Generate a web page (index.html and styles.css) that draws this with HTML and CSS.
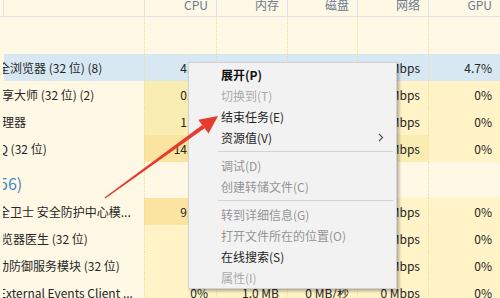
FILE: index.html
```html
<!DOCTYPE html>
<html lang="zh-CN">
<head>
    <meta charset="UTF-8">
    <title>任务管理器 - 右键菜单</title>
    <link rel="stylesheet" href="styles.css">
</head>
<body>
    <div class="taskmgr">
        <div class="row head">
            <div class="cell name"></div>
            <div class="cell">CPU</div>
            <div class="cell">内存</div>
            <div class="cell">磁盘</div>
            <div class="cell">网络</div>
            <div class="cell">GPU</div>
        </div>
        <div class="row blank">
            <div class="cell name"></div>
            <div class="cell"></div>
            <div class="cell"></div>
            <div class="cell"></div>
            <div class="cell"></div>
            <div class="cell"></div>
        </div>

        <div class="row sel">
            <div class="cell name"><span class="cut c5">全</span>浏览器 (32 位) (8)</div>
            <div class="cell">4.1%</div>
            <div class="cell">112.4 MB</div>
            <div class="cell">0.1 MB/秒</div>
            <div class="cell">0.1 Mbps</div>
            <div class="cell">4.7%</div>
        </div>
        <div class="row">
            <div class="cell name"><span class="cut c1">享</span>大师 (32 位) (2)</div>
            <div class="cell h1">0.3%</div>
            <div class="cell h0">20.6 MB</div>
            <div class="cell h0">0 MB/秒</div>
            <div class="cell h0">0 Mbps</div>
            <div class="cell h0">0%</div>
        </div>
        <div class="row">
            <div class="cell name"><span class="cut c1">理</span>器</div>
            <div class="cell h1">1.2%</div>
            <div class="cell h0">31.8 MB</div>
            <div class="cell h0">0 MB/秒</div>
            <div class="cell h0">0 Mbps</div>
            <div class="cell h0">0%</div>
        </div>
        <div class="row">
            <div class="cell name"><span class="cut c4">Q</span> (32 位)</div>
            <div class="cell h2">14.6%</div>
            <div class="cell h0">86.2 MB</div>
            <div class="cell h0">0.1 MB/秒</div>
            <div class="cell h1">0 Mbps</div>
            <div class="cell h0">0%</div>
        </div>

        <div class="row group">
            <div class="cell name"><span class="cut c4">5</span>6)</div>
            <div class="cell"></div>
            <div class="cell"></div>
            <div class="cell"></div>
            <div class="cell"></div>
            <div class="cell"></div>
        </div>

        <div class="row">
            <div class="cell name"><span class="cut c5">全</span>卫士 安全防护中心模...</div>
            <div class="cell h2">9.8%</div>
            <div class="cell h0">44.0 MB</div>
            <div class="cell h0">0 MB/秒</div>
            <div class="cell h0">0 Mbps</div>
            <div class="cell h0">0%</div>
        </div>
        <div class="row">
            <div class="cell name"><span class="cut c2">览</span>器医生 (32 位)</div>
            <div class="cell h0">0%</div>
            <div class="cell h0">3.2 MB</div>
            <div class="cell h0">0 MB/秒</div>
            <div class="cell h0">0 Mbps</div>
            <div class="cell h0">0%</div>
        </div>
        <div class="row">
            <div class="cell name"><span class="cut c6">动</span>防御服务模块 (32 位)</div>
            <div class="cell h0">0%</div>
            <div class="cell h0">5.6 MB</div>
            <div class="cell h0">0 MB/秒</div>
            <div class="cell h0">0 Mbps</div>
            <div class="cell h0">0%</div>
        </div>
        <div class="row">
            <div class="cell name"><span class="cut c4">E</span>xternal Events Client ...</div>
            <div class="cell h0">0%</div>
            <div class="cell h0">1.0 MB</div>
            <div class="cell h0">0 MB/秒</div>
            <div class="cell h0">0 Mbps</div>
            <div class="cell h0">0%</div>
        </div>

        <div class="menu">
            <div class="item bold">展开(P)</div>
            <div class="item off">切换到(T)</div>
            <div class="item">结束任务(E)</div>
            <div class="item">资源值(V)
                <svg class="chev" width="6" height="9" viewBox="0 0 6 9"><path d="M1 1 L4.5 4.5 L1 8" fill="none" stroke="#555" stroke-width="1.2"/></svg>
            </div>
            <div class="sep"></div>
            <div class="item dim">调试(D)</div>
            <div class="item dim">创建转储文件(C)</div>
            <div class="sep"></div>
            <div class="item dim">转到详细信息(G)</div>
            <div class="item dim">打开文件所在的位置(O)</div>
            <div class="item">在线搜索(S)</div>
            <div class="item off">属性(I)</div>
        </div>

        <svg class="arrow" width="500" height="298" viewBox="0 0 500 298">
            <polygon points="105.3,198.5 104.5,197.4 202.2,125.0 204.6,128.3" fill="#e63b2e"/>
            <polygon points="218,116 208.5,133.5 198.3,119.8" fill="#e63b2e"/>
        </svg>
    </div>
</body>
</html>
```

FILE: styles.css
```css
body {
    margin: 0;
    background: #fff8e5;
    font-family: "Noto Sans CJK SC", "Liberation Sans", sans-serif;
    font-size: 12px;
    color: #262626;
}
.taskmgr {
    position: relative;
    width: 500px;
    height: 298px;
    overflow: hidden;
    background: #fff8e5;
}
.row {
    display: grid;
    grid-template-columns: 144px 72px 71px 70px 71px 72px;
    height: 27px;
}
.cell {
    box-sizing: border-box;
    border-left: 1px dotted #f2dc95;
    padding-right: 8px;
    text-align: right;
    line-height: 27px;
    white-space: nowrap;
    overflow: hidden;
}
.cell.name {
    border-left: none;
    text-align: left;
    margin-left: 3px;
    padding-left: 0;
}
.cut {
    display: inline-block;
}
.c1 { margin-left: -1px; }
.c2 { margin-left: -2px; }
.c4 { margin-left: -4px; }
.c5 { margin-left: -5px; }
.c6 { margin-left: -6px; }

.head {
    height: 17px;
    border-bottom: 1px solid #e0e3e7;
    box-sizing: border-box;
}
.head .cell {
    border-left: 1px solid #dbe1e8;
    line-height: 10px;
    color: #6a7b92;
}
.blank {
    height: 37px;
}
.sel {
    background: linear-gradient(to right, transparent 4px, #d7e8f2 4px);
}
.group {
    height: 36px;
}
.group .name {
    color: #4b84c8;
    font-size: 16px;
    line-height: 42px;
}
.h0 { background: #fff3c7; }
.h1 { background: #faedb2; }
.h2 { background: #fbe4a0; }

.menu {
    position: absolute;
    left: 188px;
    top: 62px;
    width: 209px;
    box-sizing: border-box;
    padding: 1px 0 0;
    background: #f2f2f2;
    border: 1px solid #d2d2d2;
    box-shadow: 2px 2px 3px rgba(0, 0, 0, 0.3);
}
.item {
    height: 21px;
    line-height: 21px;
    padding: 0 12px 0 32px;
    display: flex;
    justify-content: space-between;
    align-items: center;
    color: #262626;
}
.item.bold {
    font-weight: bold;
    color: #111;
}
.item.dim { color: #959595; }
.item.off { color: #ababab; }
.sep {
    height: 1px;
    margin: 3px 3px 3px 29px;
    background: #d5d5d5;
}
.arrow {
    position: absolute;
    left: 0;
    top: 0;
    pointer-events: none;
}
```
